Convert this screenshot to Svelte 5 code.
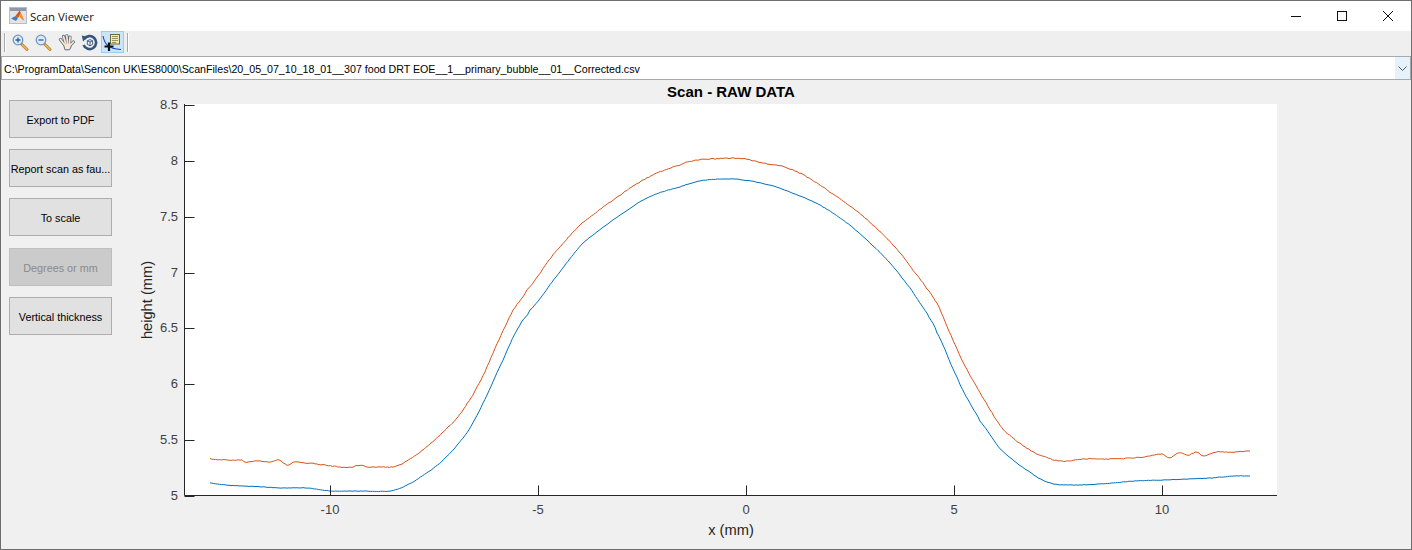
<script lang="ts">
    const path = 'C:\\ProgramData\\Sencon UK\\ES8000\\ScanFiles\\20_05_07_10_18_01__307 food DRT EOE__1__primary_bubble__01__Corrected.csv';

    const actions = [
        { label: 'Export to PDF' },
        { label: 'Report scan as fau...' },
        { label: 'To scale' },
        { label: 'Degrees or mm', disabled: true },
        { label: 'Vertical thickness' }
    ];

    // axes, in page pixels
    const plot = { left: 184.5, right: 1277, top: 104, bottom: 495.5 };
    const xTicks = [-10, -5, 0, 5, 10].map((v) => ({ label: String(v), x: 746 + v * 41.6 }));
    const yTicks = ['8.5', '8', '7.5', '7', '6.5', '6', '5.5', '5'].map((label) => ({
        label,
        y: 496 - (Number(label) - 5) * 111.7
    }));

    const upper = [
        [210, 459], [225, 460], [242, 460], [244, 462], [258, 461], [270, 462], [279, 460], [287, 465], [295, 462],
        [307, 463], [325, 465], [340, 467], [352, 467], [360, 465], [368, 467], [380, 467], [393, 467], [405, 462],
        [420, 452], [440, 435], [458, 417], [473, 395], [483, 376], [493, 353], [503, 331], [513, 310], [527, 290],
        [553, 255], [580, 225], [613, 200], [647, 178], [680, 165], [697, 160], [723, 158.5], [743, 158.5], [763, 163],
        [775, 165], [787, 168], [807, 177], [830, 192], [853, 208], [873, 225], [893, 245], [913, 270], [937, 303],
        [953, 340], [967, 370], [980, 393], [1000, 425], [1015, 440], [1035, 453], [1060, 461], [1085, 459],
        [1112, 459], [1145, 457], [1162, 454], [1169, 458], [1179, 453], [1188, 455], [1197, 452], [1203, 456],
        [1215, 452], [1232, 452], [1250, 451]
    ];
    const lower = [
        [210, 483], [225, 485], [243, 486], [265, 487], [283, 488], [307, 488], [330, 491], [345, 491], [363, 491],
        [390, 491], [407, 485], [430, 471], [445, 458], [467, 433], [483, 403], [503, 360], [520, 325], [530, 310],
        [560, 272], [583, 243], [613, 220], [647, 198], [680, 187], [700, 181], [723, 179], [743, 180], [773, 186],
        [803, 197], [823, 207], [850, 225], [870, 243], [890, 263], [910, 288], [927, 313], [937, 333], [957, 377],
        [970, 403], [980, 421], [1000, 449], [1030, 472], [1050, 483], [1070, 485], [1100, 484], [1135, 481],
        [1162, 480], [1212, 478], [1235, 476], [1250, 476]
    ];

    // small repeatable generator so the measurement noise stays the same on every load
    function noiseSource(seed: number) {
        let s = seed;
        return () => {
            s = (s * 16807) % 2147483647;
            return s / 2147483647 - 0.5;
        };
    }

    function trace(points: number[][], amount: number, seed: number) {
        const rand = noiseSource(seed);
        const out: string[] = [];
        for (let i = 0; i < points.length - 1; i++) {
            const p0 = points[Math.max(i - 1, 0)];
            const p1 = points[i];
            const p2 = points[i + 1];
            const p3 = points[Math.min(i + 2, points.length - 1)];
            const steps = Math.max(1, Math.round((p2[0] - p1[0]) / 2));
            for (let n = 0; n < steps; n++) {
                const t = n / steps;
                const x = p1[0] + (p2[0] - p1[0]) * t;
                const y = 0.5 * (2 * p1[1] + (p2[1] - p0[1]) * t
                    + (2 * p0[1] - 5 * p1[1] + 4 * p2[1] - p3[1]) * t * t
                    + (3 * p1[1] - p0[1] - 3 * p2[1] + p3[1]) * t * t * t);
                out.push(`${x.toFixed(1)},${(y + rand() * amount).toFixed(2)}`);
            }
        }
        const last = points[points.length - 1];
        out.push(`${last[0]},${last[1]}`);
        return out.join(' ');
    }

    const upperLine = trace(upper, 0.9, 4711);
    const lowerLine = trace(lower, 0.45, 9133);
</script>

<div class="window">
    <header class="titlebar">
        <svg class="app-icon" viewBox="0 0 18 18" width="18" height="18">
            <rect x="0.5" y="0.5" width="17" height="16" fill="#e4e4e6" stroke="#b9bcc2" />
            <rect x="1" y="1" width="16" height="3" fill="#8f98a6" />
            <path d="M2 11.5 L6.5 9 L9 11 L7 14 Z" fill="#3f7fbf" />
            <path d="M6.5 9 L10.5 3.5 L12 6 L9 11 Z" fill="#d9531e" />
            <path d="M10.5 3.5 L13 8 L15.5 14 L12.5 12 L10.5 9.5 L12 6 Z" fill="#f0902a" />
        </svg>
        <span class="title">Scan Viewer</span>
        <div class="win-buttons">
            <button class="win-btn" aria-label="Minimize">
                <svg viewBox="0 0 10 10" width="10" height="10"><path d="M0 5.5 H10" stroke="#111" fill="none" /></svg>
            </button>
            <button class="win-btn" aria-label="Maximize">
                <svg viewBox="0 0 10 10" width="10" height="10"><rect x="0.5" y="0.5" width="9" height="9" stroke="#111" fill="none" /></svg>
            </button>
            <button class="win-btn" aria-label="Close">
                <svg viewBox="0 0 10 10" width="10" height="10"><path d="M0 0 L10 10 M10 0 L0 10" stroke="#111" fill="none" /></svg>
            </button>
        </div>
    </header>

    <div class="toolbar">
        <span class="sep first"></span>
        <button class="tool" aria-label="Zoom in">
            <svg viewBox="0 0 17 17" width="17" height="17">
                <path d="M9.5 10 L15 15.5" stroke="#b9853a" stroke-width="3" stroke-linecap="round" />
                <path d="M10.5 11 L15 15.5" stroke="#f2b45a" stroke-width="1.4" stroke-linecap="round" />
                <circle cx="6" cy="6" r="4.8" fill="#dceafa" stroke="#6f98c6" stroke-width="1.3" />
                <path d="M3.5 6 H8.5 M6 3.5 V8.5" stroke="#2d5f98" stroke-width="1.3" />
            </svg>
        </button>
        <button class="tool" aria-label="Zoom out">
            <svg viewBox="0 0 17 17" width="17" height="17">
                <path d="M9.5 10 L15 15.5" stroke="#b9853a" stroke-width="3" stroke-linecap="round" />
                <path d="M10.5 11 L15 15.5" stroke="#f2b45a" stroke-width="1.4" stroke-linecap="round" />
                <circle cx="6" cy="6" r="4.8" fill="#dceafa" stroke="#6f98c6" stroke-width="1.3" />
                <path d="M3.5 6 H8.5" stroke="#2d5f98" stroke-width="1.3" />
            </svg>
        </button>
        <button class="tool" aria-label="Pan">
            <svg viewBox="0 0 17 17" width="17" height="17">
                <g stroke="#5d6d84" stroke-width="3.2" stroke-linecap="round" fill="none">
                    <path d="M6 10 L2.5 5.5 M7.5 8 L5.5 2.5 M9.5 8 L8.8 1.8 M11.5 8.5 L12 3.2 M12.5 11 L15.3 8" />
                </g>
                <path d="M5 9 H13 V13 L11.5 15.8 H7 Z" fill="#fde6cf" stroke="#5d6d84" stroke-width="1" />
                <g stroke="#fde6cf" stroke-width="1.7" stroke-linecap="round" fill="none">
                    <path d="M6 10 L2.5 5.5 M7.5 9 L5.5 2.5 M9.5 9 L8.8 1.8 M11.5 9.5 L12 3.2 M12.5 11 L15.3 8" />
                </g>
            </svg>
        </button>
        <button class="tool" aria-label="Rotate">
            <svg viewBox="0 0 17 17" width="17" height="17">
                <path d="M3.2 5 A6.5 6.5 0 1 1 2.6 11" fill="none" stroke="#35557c" stroke-width="2.6" />
                <path d="M0.8 1.5 L6.8 3 L2 7.6 Z" fill="#35557c" />
                <path d="M6.3 6.8 L9 5.6 L11.6 6.8 V10.4 L9 11.8 L6.3 10.4 Z M6.3 6.8 L9 8 L11.6 6.8 M9 8 V11.8" fill="#eef2f7" stroke="#35557c" stroke-width="0.9" />
            </svg>
        </button>
        <button class="tool active" aria-label="Data cursor">
            <svg viewBox="0 0 21 19" width="21" height="19">
                <path d="M1 3 C2.5 10 5 16 19 16.5" fill="none" stroke="#1c3fd0" stroke-width="1.1" />
                <rect x="8.5" y="1.5" width="9" height="9.5" fill="#f5eda6" stroke="#6b6a45" />
                <path d="M10 3.5 H16 M10 5.5 H16 M10 7.5 H16 M10 9.5 H14" stroke="#8a8a60" stroke-width="0.9" />
                <path d="M7 9.5 V18 M2.5 13.5 H11.5" stroke="#111" stroke-width="2.2" />
            </svg>
        </button>
        <span class="sep"></span>
    </div>

    <div class="path-select">
        <span class="path-text">{path}</span>
        <span class="path-arrow">
            <svg viewBox="0 0 9 5" width="9" height="5"><path d="M0.5 0.5 L4.5 4.5 L8.5 0.5" fill="none" stroke="#555" /></svg>
        </span>
    </div>

    <main class="content">
        <aside class="actions">
            {#each actions as action}
                <button class="action" class:disabled={action.disabled}>{action.label}</button>
            {/each}
        </aside>

        <svg class="chart" viewBox="130 80 1281 469" width="1281" height="469">
            <rect x={plot.left} y={plot.top} width={plot.right - plot.left} height={plot.bottom - plot.top} fill="#fff" />
            <text class="chart-title" x="731" y="97">Scan - RAW DATA</text>

            <polyline points={upperLine} fill="none" stroke="#d95319" stroke-width="1" />
            <polyline points={lowerLine} fill="none" stroke="#0072bd" stroke-width="1" />

            <path d="M{plot.left} {plot.top} V{plot.bottom} H{plot.right}" fill="none" stroke="#262626" />
            {#each yTicks as tick}
                <path d="M{plot.left} {Math.round(tick.y) + 0.5} h10" stroke="#262626" />
                <text class="tick" x="178" y={tick.y + 4} text-anchor="end">{tick.label}</text>
            {/each}
            {#each xTicks as tick}
                <path d="M{Math.round(tick.x) + 0.5} {plot.bottom} v-10" stroke="#262626" />
                <text class="tick" x={tick.x} y="514" text-anchor="middle">{tick.label}</text>
            {/each}

            <text class="axis-label" x="731" y="535">x (mm)</text>
            <text class="axis-label" transform="translate(152 300) rotate(-90)">height (mm)</text>
        </svg>
    </main>
</div>

<style>
    :global(body) {
        margin: 0;
        background: #f0f0f0;
    }
    .window {
        box-sizing: border-box;
        width: 1412px;
        height: 550px;
        display: flex;
        flex-direction: column;
        border: 1px solid #6e6e6e;
        background: #f0f0f0;
        overflow: hidden;
        font-family: "Liberation Sans", Arial, sans-serif;
        color: #000;
    }
    .titlebar {
        height: 30px;
        flex: none;
        display: flex;
        align-items: center;
        padding-left: 8px;
        background: #fff;
    }
    .app-icon {
        flex: none;
        margin-right: 3px;
    }
    .title {
        font: 11.4px "Open Sans", sans-serif;
        color: #111;
    }
    .win-buttons {
        margin-left: auto;
        display: flex;
    }
    .win-btn {
        width: 46px;
        height: 30px;
        padding: 0;
        border: 0;
        background: transparent;
        display: flex;
        align-items: center;
        justify-content: center;
    }
    .toolbar {
        height: 25px;
        flex: none;
        display: flex;
        align-items: flex-start;
        padding-left: 3px;
        background: #efefef;
    }
    .sep {
        width: 1px;
        height: 19px;
        margin: 2px 0 0 3px;
        background: #a8a8a8;
        border-right: 1px solid #fff;
    }
    .sep.first {
        margin: 2px 3px 0 0;
    }
    .tool {
        box-sizing: border-box;
        width: 23px;
        height: 22px;
        padding: 0;
        border: 1px solid transparent;
        background: transparent;
        display: flex;
        align-items: center;
        justify-content: center;
    }
    .tool.active {
        background: #cce4f7;
        border-color: #99cdf3;
    }
    .path-select {
        box-sizing: border-box;
        height: 24px;
        flex: none;
        display: flex;
        align-items: stretch;
        background: #fff;
        border: 1px solid #a9a9a9;
    }
    .path-text {
        flex: 1;
        padding: 2px 0 0 2px;
        font-size: 10.67px;
        line-height: 20px;
        white-space: nowrap;
    }
    .path-arrow {
        width: 15px;
        display: flex;
        align-items: center;
        justify-content: center;
        background: #e5f1fb;
    }
    .content {
        flex: 1;
        display: flex;
        min-height: 0;
    }
    .actions {
        box-sizing: border-box;
        width: 129px;
        flex: none;
        display: flex;
        flex-direction: column;
        gap: 11px;
        padding: 20px 0 0 8px;
    }
    .action {
        box-sizing: border-box;
        width: 103px;
        height: 38px;
        padding: 2px 0 0;
        border: 1px solid #adadad;
        background: #e1e1e1;
        color: #000;
        font-family: inherit;
        font-size: 10.8px;
        white-space: nowrap;
    }
    .action.disabled {
        margin-top: 1px;
        background: #cbcbcb;
        border-color: #bfbfbf;
        color: #8a8a8a;
    }
    .chart {
        display: block;
        flex: none;
    }
    .chart text {
        font-family: "Liberation Sans", Arial, sans-serif;
    }
    .chart .chart-title {
        font-size: 15px;
        font-weight: bold;
        text-anchor: middle;
        fill: #000;
    }
    .chart .tick {
        font-size: 13px;
        fill: #404040;
    }
    .chart .axis-label {
        font-size: 14.67px;
        text-anchor: middle;
        fill: #262626;
    }
</style>
